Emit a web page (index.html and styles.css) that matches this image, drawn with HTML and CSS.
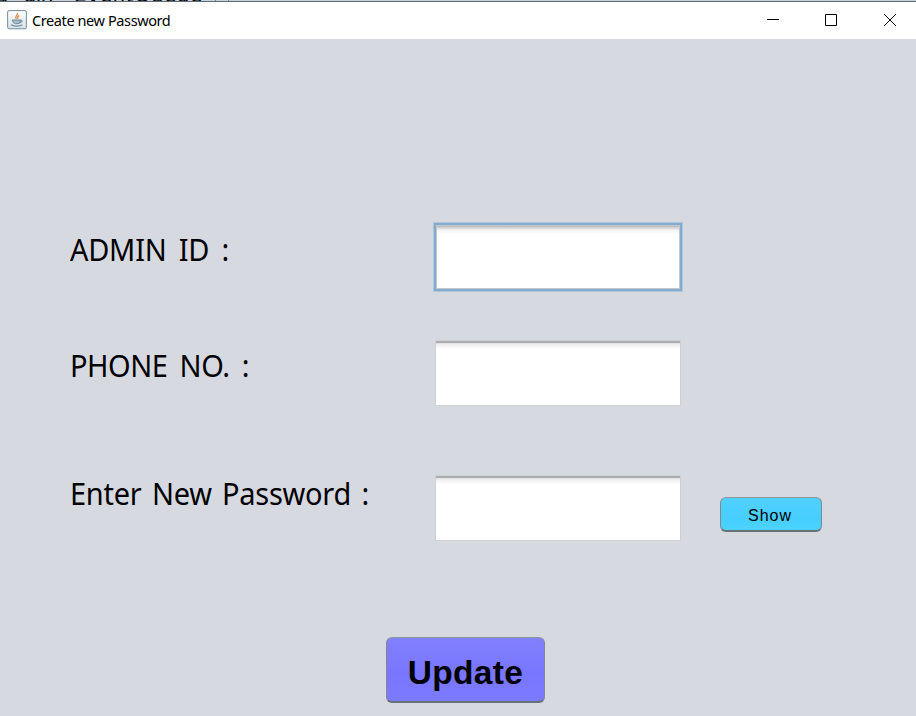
FILE: index.html
```html
<!DOCTYPE html>
<html lang="en">
<head>
<meta charset="utf-8">
<title>Create new Password</title>
<link rel="stylesheet" href="styles.css">
</head>
<body>
<div class="backdrop"><span class="code-a">a</span><span class="code-b">ain</span><span class="code-c">EventQueue</span><span class="code-d"></span></div>
<header class="titlebar">
  <svg class="app-icon" width="20" height="20" viewBox="0 0 20 20">
    <defs><linearGradient id="face" x1="0" y1="0" x2="0" y2="1"><stop offset="0" stop-color="#fff"/><stop offset="1" stop-color="#d5dde3"/></linearGradient></defs>
    <rect x=".6" y=".6" width="18.8" height="18.2" rx="1.5" fill="url(#face)" stroke="#7890a3"/>
    <path d="M10 3.2c1.7 1.8-2.8 2.6-.8 5.6M12.2 5.7c-2.4 1-1.7 1.8-1.6 3" fill="none" stroke="#e98b43" stroke-width="1.4"/>
    <path d="M5.2 10h8v2.3c0 1.8-6.7 1.8-7 0zM13.2 10.2c3-.3 2.2 2.3-.5 2.6" fill="#a9bbc8" stroke="#6c8ba2" stroke-width="1"/>
    <path d="M4.2 14.8c2.5 1.8 8.5 1.8 11 0" fill="none" stroke="#6c8ba2" stroke-width="1.3"/>
  </svg>
  <span class="title">Create new Password</span>
  <div class="controls">
    <svg width="12" height="12" viewBox="0 0 12 12"><path d="M0 5.5h12"/></svg>
    <svg width="12" height="12" viewBox="0 0 12 12"><path d="M.5.5h11v11H.5z"/></svg>
    <svg class="close" width="12" height="12" viewBox="0 0 12 12"><path d="M0 0l12 12M12 0L0 12"/></svg>
  </div>
</header>
<main class="form">
  <div class="row row-id"><label class="label label-id" for="admin">ADMIN ID :</label><input class="field focused" id="admin"></div>
  <div class="row row-phone"><label class="label label-phone" for="phone">PHONE NO. :</label><input class="field" id="phone"></div>
  <div class="row row-pass"><label class="label label-pass" for="pass">Enter New Password :</label><input class="field" id="pass" type="password"><button class="btn show">Show</button></div>
  <button class="btn update">Update</button>
</main>
</body>
</html>
```

FILE: styles.css
```css
* { box-sizing: border-box; }
body { margin: 0; width: 916px; height: 716px; overflow: hidden; background: #d6d9e0; color: #000; }
.backdrop { display: flex; height: 2px; overflow: hidden; background: #c5d1dc; border-bottom: 1px solid #616c77; font: 20px/20px "DejaVu Sans", sans-serif; }
.backdrop span { margin-top: -15px; }
.code-a { width: 8px; text-indent: -4px; }
.code-b { margin-left: 16px; letter-spacing: -.5px; }
.code-c { margin-left: 21px; letter-spacing: .6px; }
.backdrop .code-d { width: 14px; height: 20px; margin-left: 12px; border: solid #7b858f; border-width: 0 1px; }
.titlebar { display: flex; height: 37px; background: #fff; padding-left: 7px; }
.app-icon { margin-top: 8px; }
.title { margin: 8px 0 0 5px; font: 14.5px/21px "Noto Sans", sans-serif; letter-spacing: -.4px; white-space: nowrap; }
.controls { display: flex; gap: 46px; margin: 12px 21px 0 auto; }
.controls svg { fill: none; stroke: #000; stroke-width: 1; }
.controls .close { margin: 0 -1px 0 1px; }
.form { padding: 183px 0 0 70px; }
.row { display: flex; align-items: flex-start; }
.row-id { height: 119px; }
.row-phone { height: 135px; }
.row-pass { height: 161px; }
.label { width: 366px; flex: none; font: 31.5px/40px "Noto Sans", sans-serif; white-space: nowrap; transform: scaleX(.92); transform-origin: left; }
.label-id { margin-top: 7px; letter-spacing: -.3px; word-spacing: 5.5px; }
.label-phone { margin-top: 4px; letter-spacing: -.5px; word-spacing: 5.5px; }
.label-pass { margin-top: -3px; letter-spacing: -.3px; word-spacing: 3.5px; }
.field { width: 244px; height: 64px; margin: 0; padding: 0 8px; outline: 0; border: 0; box-shadow: inset 0 2px #acadb0, 0 0 0 1px #cdd0d4; background: linear-gradient(#bdbdbd, #d9d9d9 2px, #ededed 3px, #f7f7f7 6px, #fff 8px); font: 28px "Noto Sans", sans-serif; }
.focused { width: 248px; height: 68px; margin: 1px 0 0 -2px; border: 2px solid #82abd2; box-shadow: 0 0 0 1px #b0c4da, inset 0 0 0 1px #c2c7ca; background: linear-gradient(#aaa, #d6d6d6 3px, #f2f2f2 5px, #fff 9px); }
.btn { display: block; padding: 0; border: 1px solid; border-color: #8c979d #7f8990 #667178; color: #000; }
.show { width: 102px; height: 35px; margin: 21px 0 0 40px; padding: 4px 2px 0 0; border-width: 1px 1px 2px; border-radius: 6px; background: linear-gradient(#50d0ff, #46ceff 70%, #4cd3ff); font: 16px "Liberation Sans", sans-serif; letter-spacing: 1px; }
.update { width: 159px; height: 66px; margin: 0 0 0 316px; padding: 7px 0 0; border-width: 1px 1px 2px; border-radius: 6px; background: linear-gradient(#8280ff, #7876ff 55%, #7b7aff); font: bold 33.5px "Liberation Sans", sans-serif; letter-spacing: .3px; }
```
